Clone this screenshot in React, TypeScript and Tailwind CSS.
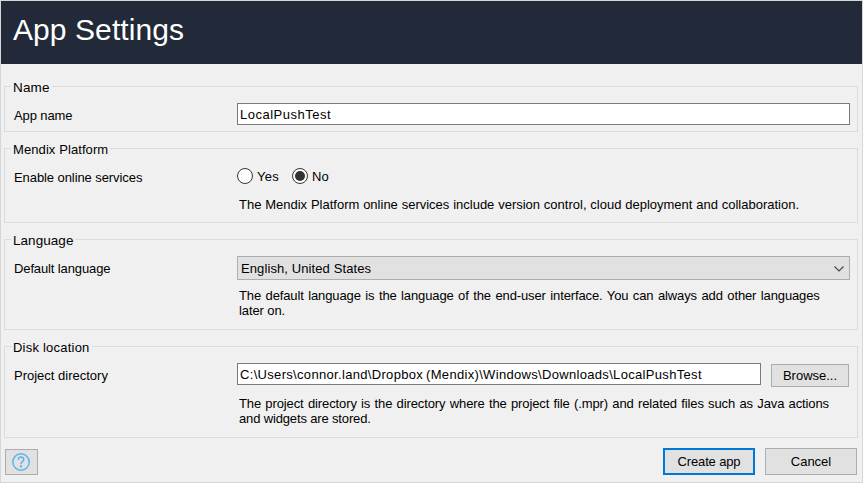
import type { ReactNode } from "react";

function Group({ title, titleClass, className, children }: { title: string; titleClass: string; className: string; children: ReactNode }) {
  return (
    <section className={`border border-[#dcdcdc] ${className}`}>
      <h2 className="-mt-[7px] ml-[6px] flex h-[15px] w-max bg-[#f0f0f0] pr-[2px] pl-[2px]">
        <span className={titleClass}>{title}</span>
      </h2>
      {children}
    </section>
  );
}

function Label({ text, className }: { text: string; className: string }) {
  return (
    <div className="w-[232px] shrink-0 pl-[9px]">
      <span className={`block ${className}`}>{text}</span>
    </div>
  );
}

function Radio({ checked }: { checked?: boolean }) {
  return (
    <svg width="16" height="16" viewBox="0 0 16 16" className="block shrink-0">
      <circle cx="8" cy="8" r="7.5" fill="#fff" stroke="#333" />
      {checked && <circle cx="8" cy="8" r="5" fill="#333" />}
    </svg>
  );
}

export default function App() {
  return (
    <div className="flex h-[483px] w-[863px] flex-col border border-[#d6d6d6] bg-[#f0f0f0] font-['Liberation_Sans',Arial,sans-serif] text-[13px] leading-[15px] whitespace-nowrap text-black">
      <header className="h-[63px] shrink-0 bg-[#222938] pt-[12px] pl-[12px] text-[30px] leading-[34px] text-white">
        <h1 className="tracking-[0.08px]">App Settings</h1>
      </header>
      <main className="flex w-[857px] flex-col pt-[22px] pl-[3px]">
        <Group title="Name" titleClass="text-[13.5px] tracking-[0.15px]" className="h-[46px]">
          <div className="flex pt-[8px]">
            <Label text="App name" className="pt-[5px] tracking-[-0.1px]" />
            <div className="h-[22px] w-[613px] border border-[#7a7a7a] bg-white pt-[3px] pl-[2px]">
              <span className="tracking-[0.5px]">LocalPushTest</span>
            </div>
          </div>
        </Group>

        <Group title="Mendix Platform" titleClass="tracking-[0.09px]" className="mt-[16px] h-[75px]">
          <div className="flex h-[27px] pt-[11px]">
            <Label text="Enable online services" className="pt-[2px] tracking-[-0.08px]" />
            <div className="flex h-[16px] items-start">
              <Radio />
              <span className="w-[39px] pt-[1px] pl-[4px] tracking-[0.3px]">Yes</span>
              <Radio checked />
              <span className="pt-[1px] pl-[4px]">No</span>
            </div>
          </div>
          <p className="mt-[13px] ml-[234px] [word-spacing:0.2px]">
            The Mendix Platform online services include version control, cloud deployment and collaboration.
          </p>
        </Group>

        <Group title="Language" titleClass="text-[13.5px] tracking-[0.05px]" className="mt-[16px] h-[91px]">
          <div className="flex pt-[8px]">
            <Label text="Default language" className="pt-[5px] tracking-[-0.12px]" />
            <div className="flex h-[24px] w-[613px] justify-between border border-[#adadad] bg-[#e1e1e1] pt-[4px] pr-[5px] pl-[3px]">
              <span className="tracking-[0.1px]">English, United States</span>
              <svg width="10" height="6" viewBox="0 0 10 6" className="mt-[5px]" fill="none" stroke="#444" strokeWidth="1.1">
                <path d="M.5.5 5 5 9.5.5" />
              </svg>
            </div>
          </div>
          <div className="mt-[8px] ml-[234px]">
            <p className="tracking-[-0.12px] [word-spacing:1px]">The default language is the language of the end-user interface. You can always add other languages</p>
            <p className="tracking-[-0.1px]">later on.</p>
          </div>
        </Group>

        <Group title="Disk location" titleClass="tracking-[0.22px]" className="mt-[16px] h-[92px]">
          <div className="flex pt-[8px]">
            <Label text="Project directory" className="pt-[5px]" />
            <div className="h-[22px] w-[524px] border border-[#7a7a7a] bg-white pt-[3px] pl-[2px]">
              <span className="tracking-[0.32px] [word-spacing:-1px]">C:\Users\connor.land\Dropbox (Mendix)\Windows\Downloads\LocalPushTest</span>
            </div>
            <button className="mt-[1px] ml-[10px] flex h-[23px] w-[78px] justify-center border border-[#adadad] bg-[#e1e1e1] pt-[3px]">
              <span>Browse...</span>
            </button>
          </div>
          <div className="mt-[9px] ml-[234px]">
            <p className="tracking-[-0.11px] [word-spacing:0.8px]">The project directory is the directory where the project file (.mpr) and related files such as Java actions</p>
            <p className="tracking-[-0.15px]">and widgets are stored.</p>
          </div>
        </Group>
      </main>
      <footer className="flex w-[856px] pt-[10px] pl-[4px]">
        <button className="mt-[1px] flex h-[26px] w-[33px] border border-[#adadad] bg-[#e1e1e1] pt-[3px] pl-[6px]">
          <svg width="18" height="18" viewBox="0 0 18 18" fill="none" stroke="#5ab4f0" strokeWidth="1.5">
            <circle cx="9" cy="9" r="8.2" />
            <path d="M6.3 6.8C6.3 5.1 7.5 4.1 9 4.1s2.7 1 2.7 2.5c0 2-2.7 2.1-2.7 4.4" />
            <path d="M9 12.2v2.2" strokeWidth="2" />
          </svg>
        </button>
        <button className="ml-auto flex h-[27px] w-[92px] justify-center border-2 border-[#0078d7] bg-[#e1e1e1] pt-[4px]">
          <span className="tracking-[-0.15px]">Create app</span>
        </button>
        <button className="ml-[10px] flex h-[27px] w-[92px] justify-center border border-[#adadad] bg-[#e1e1e1] pt-[5px]">
          <span>Cancel</span>
        </button>
      </footer>
    </div>
  );
}
